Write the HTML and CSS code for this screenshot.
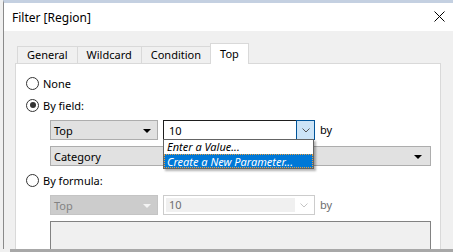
FILE: index.html
```html
<!DOCTYPE html>
<html>
<head>
    <title>Filter [Region]</title>
    <link rel="stylesheet" href="styles.css">
</head>
<body>
    <div class="window">
        <div class="titlebar">
            <span class="title">Filter [Region]</span>
            <svg class="close" width="11" height="11" viewBox="0 0 11 11">
                <path d="M0.5 0.5 L10.5 10.5 M10.5 0.5 L0.5 10.5" stroke="#000" stroke-width="1" fill="none"/>
            </svg>
        </div>

        <div class="dialog-body">
            <div class="tabs">
                <div class="tab">General</div>
                <div class="tab">Wildcard</div>
                <div class="tab">Condition</div>
                <div class="tab active">Top</div>
            </div>

            <div class="panel">
                <div class="radio-row">
                    <span class="radio"></span>
                    <span>None</span>
                </div>
                <div class="radio-row">
                    <span class="radio checked"></span>
                    <span>By field:</span>
                </div>
                <div class="indent">
                    <div class="field-row">
                        <div class="select small">
                            <span>Top</span>
                            <span class="tri"></span>
                        </div>
                        <div class="combo focused">
                            <span class="combo-text">10</span>
                            <span class="combo-btn">
                                <svg width="8" height="5" viewBox="0 0 8 5"><path d="M0.5 0.5 L4 4 L7.5 0.5" stroke="#555" fill="none"/></svg>
                            </span>
                            <!-- open list of the combo -->
                            <div class="combo-list">
                                <div class="combo-item">Enter a Value...</div>
                                <div class="combo-item selected">Create a New Parameter...</div>
                            </div>
                        </div>
                        <span class="by">by</span>
                    </div>
                    <div class="select wide">
                        <span>Category</span>
                        <span class="tri"></span>
                    </div>
                </div>

                <div class="radio-row">
                    <span class="radio"></span>
                    <span>By formula:</span>
                </div>
                <div class="indent">
                    <div class="field-row">
                        <div class="select small disabled">
                            <span>Top</span>
                            <span class="tri"></span>
                        </div>
                        <div class="combo disabled">
                            <span class="combo-text">10</span>
                            <span class="combo-btn">
                                <svg width="8" height="5" viewBox="0 0 8 5"><path d="M0.5 0.5 L4 4 L7.5 0.5" stroke="#c4c4c4" fill="none"/></svg>
                            </span>
                        </div>
                        <span class="by disabled">by</span>
                    </div>
                    <div class="formula-box"></div>
                </div>
            </div>
        </div>
    </div>
    <div class="bottom-edge"></div>
</body>
</html>
```

FILE: styles.css
```css
body {
    margin: 0;
    background-color: #f0f0f0;
    font-family: "Noto Sans", "Liberation Sans", sans-serif;
    font-size: 11px;
    color: #000;
}
.window {
    height: 249px;
    margin-left: 3px;
    border-left: 1px solid #8a8a8a;
    border-top: 3px solid #c4d0e1;
    box-sizing: border-box;
    display: flex;
    flex-direction: column;
    overflow: hidden;
    background-color: #f0f0f0;
}
.titlebar {
    height: 28px;
    flex-shrink: 0;
    background-color: #fff;
    display: flex;
    align-items: center;
    justify-content: space-between;
    padding: 0 8px 0 8px;
}
.title {
    font-size: 12px;
}
.close {
    display: block;
    margin-top: -1px;
}
.dialog-body {
    flex: 1;
    min-height: 0;
    padding: 12px 0 0 11px;
}
.tabs {
    display: flex;
    align-items: flex-end;
    height: 20px;
    padding-left: 2px;
}
.tab {
    height: 17px;
    line-height: 16px;
    padding: 0 9px;
    border: 1px solid #d9d9d9;
    border-bottom: none;
    margin-right: -1px;
    background-color: #f0f0f0;
    box-sizing: border-box;
}
.tab.active {
    position: relative;
    height: 21px;
    line-height: 20px;
    margin-bottom: -1px;
    background-color: #fff;
    padding: 0 9px;
    z-index: 1;
}
.panel {
    width: 426px;
    height: 200px;
    box-sizing: border-box;
    background-color: #fff;
    border: 1px solid #d9d9d9;
    padding: 11px 0 0 10px;
}
.radio-row {
    display: flex;
    align-items: center;
    gap: 4px;
    height: 16px;
    margin-bottom: 6px;
}
.radio {
    width: 13px;
    height: 13px;
    box-sizing: border-box;
    border: 1px solid #333;
    border-radius: 50%;
    background-color: #fff;
    display: flex;
    align-items: center;
    justify-content: center;
}
.radio.checked::after {
    content: "";
    width: 6px;
    height: 6px;
    border-radius: 50%;
    background-color: #333;
}
.indent {
    margin-left: 24px;
    margin-top: 7px;
    margin-bottom: 6px;
}
.field-row {
    display: flex;
    align-items: center;
    margin-bottom: 6px;
}
.select {
    height: 20px;
    box-sizing: border-box;
    border: 1px solid #adadad;
    background-color: #e1e1e1;
    display: flex;
    align-items: center;
    justify-content: space-between;
    padding: 0 6px 0 3px;
}
.select.small {
    width: 108px;
    margin-right: 5px;
}
.select.wide {
    width: 381px;
    padding-left: 3px;
    padding-right: 8px;
}
.tri {
    width: 0;
    height: 0;
    border-left: 4px solid transparent;
    border-right: 4px solid transparent;
    border-top: 4px solid #000;
    margin-top: 1px;
}
.select.disabled {
    background-color: #cccccc;
    border-color: #c4c4c4;
    color: #838383;
}
.select.disabled .tri {
    border-top-color: #f4f4f4;
}
.combo {
    position: relative;
    width: 152px;
    height: 20px;
    box-sizing: border-box;
    border: 1px solid #1e1e1e;
    background-color: #fff;
    display: flex;
    align-items: center;
    justify-content: space-between;
}
.combo-text {
    padding-left: 5px;
}
.combo-btn {
    width: 19px;
    height: 20px;
    margin: -1px -1px -1px 0;
    box-sizing: border-box;
    border: 1px solid #005499;
    background-color: #cce4f7;
    display: flex;
    align-items: center;
    justify-content: center;
}
.combo.disabled {
    border-color: #cccccc;
    color: #6d6d6d;
    padding: 2px;
}
.combo.disabled .combo-text {
    flex: 1;
    height: 14px;
    line-height: 14px;
    padding-left: 3px;
    background-color: #f0f0f0;
}
.combo.disabled .combo-btn {
    border: none;
    background-color: transparent;
    width: 17px;
    margin: 0;
}
.combo-list {
    position: absolute;
    left: -1px;
    top: 18px;
    width: 151px;
    box-sizing: border-box;
    border: 1px solid #646464;
    background-color: #fff;
    box-shadow: 2px 2px 2px rgba(0, 0, 0, 0.3);
    z-index: 2;
    font-style: italic;
}
.combo-item {
    height: 14px;
    line-height: 13px;
    padding-left: 3px;
    box-sizing: border-box;
}
.combo-item.selected {
    background-color: #0078d7;
    color: #fff;
    border: 1px dotted #e8a040;
    padding-left: 2px;
}
.by {
    margin-left: 5px;
    margin-top: -1px;
}
.by.disabled {
    color: #6d6d6d;
}
.formula-box {
    width: 381px;
    height: 80px;
    box-sizing: border-box;
    border: 1px solid #828282;
    background-color: #f0f0f0;
}
.bottom-edge {
    height: 3px;
    margin-left: 10px;
    background-color: #a8a8a8;
}
```
